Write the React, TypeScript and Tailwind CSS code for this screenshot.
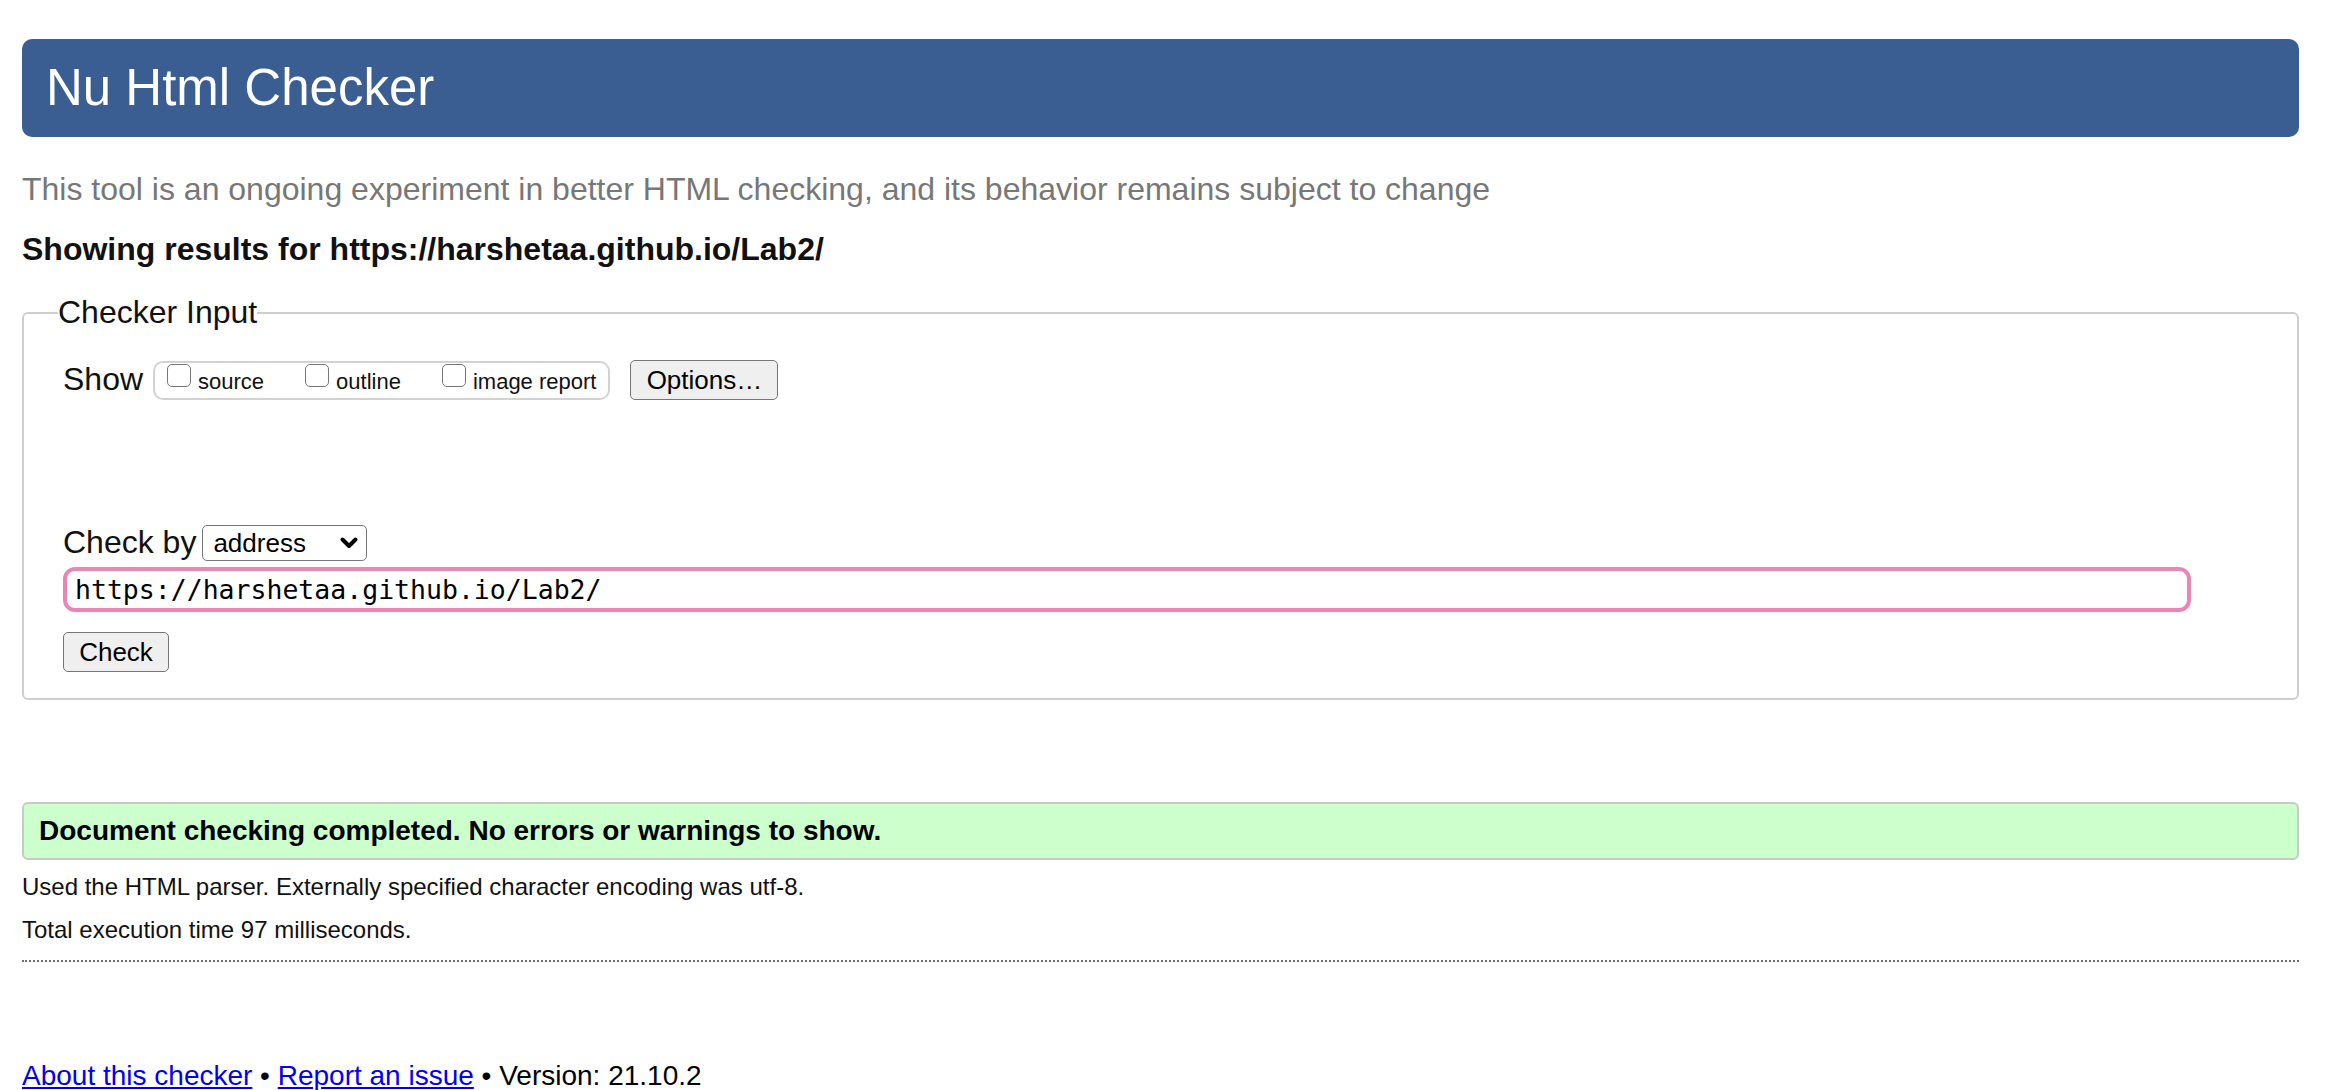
import React from "react";

const sans = "font-['Liberation_Sans',Arial,Helvetica,sans-serif]";
const mono = "font-['DejaVu_Sans_Mono',monospace]";

function ShowOption({ label }: { label: string }) {
    return (
        <label className="flex items-start">
            <input
                type="checkbox"
                className="appearance-none w-[24px] h-[23px] mt-[1px] border-[1.5px] border-[#767676] rounded-[5px] bg-white"
            />
            <span className="text-[22px] leading-[26px] mt-[6px] ml-[7px] text-[#111]">{label}</span>
        </label>
    );
}

export default function App() {
    return (
        <div className={`${sans} bg-white text-[#111] pl-[22px] pr-[51px] pb-[40px] min-h-[1090px]`}>
            {/* Title bar */}
            <div className="mt-[39px] h-[98px] rounded-[10px] bg-[#3a5e92] flex items-center pl-[24px]">
                <h1 className="text-white text-[51px] leading-[58px]">Nu Html Checker</h1>
            </div>

            <p className="mt-[34px] text-[32px] leading-[37px] text-[#777]">
                This tool is an ongoing experiment in better HTML checking, and its behavior remains subject to change
            </p>
            <p className="mt-[23px] text-[32px] leading-[37px] font-bold">
                Showing results for https://harshetaa.github.io/Lab2/
            </p>

            {/* Checker input */}
            <fieldset className="mt-[26px] border-2 border-[#cecece] rounded-[6px] pl-[39px] pr-[24px] pt-[29px] pb-[26px]">
                <legend className="-ml-[5px] p-0 text-[32px] leading-[37px]">Checker Input</legend>

                <div className="flex items-start">
                    <span className="text-[32px] leading-[37px] mt-[1px]">Show</span>
                    <div className="ml-[10px] mt-[1px] h-[39px] flex items-start gap-[41px] border-2 border-[#d2d2d2] rounded-[10px] pl-[12px] pr-[12px]">
                        <ShowOption label="source" />
                        <ShowOption label="outline" />
                        <ShowOption label="image report" />
                    </div>
                    <button className="ml-[20px] h-[40px] w-[148px] bg-[#efefef] border-[1.5px] border-[#767676] rounded-[5px] text-[26px] leading-[30px] text-black">
                        Options…
                    </button>
                </div>

                <div className="mt-[124px] flex items-center">
                    <span className="text-[32px] leading-[37px]">Check by</span>
                    <div className="ml-[6px] h-[36px] w-[165px] flex items-center justify-between border-[1.5px] border-[#767676] rounded-[5px] pl-[10px] pr-[7px] bg-white">
                        <span className="text-[26px] leading-[30px] text-black">address</span>
                        <svg width="20" height="15" viewBox="0 0 20 15" fill="none" stroke="#000" strokeWidth="4" strokeLinecap="round" strokeLinejoin="round">
                            <path d="M3.5 4.5l6.5 6.5 6.5-6.5" />
                        </svg>
                    </div>
                </div>

                <input
                    readOnly
                    value="https://harshetaa.github.io/Lab2/"
                    className={`${mono} mt-[6px] block w-[2128px] h-[45px] border-4 border-[#ea86b6] rounded-[12px] pl-[8px] text-[26.5px] leading-[32px] text-black outline-none`}
                />

                <button className="mt-[20px] block h-[40px] w-[106px] bg-[#efefef] border-[1.5px] border-[#767676] rounded-[5px] text-[26px] leading-[30px] text-black">
                    Check
                </button>
            </fieldset>

            {/* Result */}
            <div className="mt-[102px] h-[58px] flex items-center bg-[#ccffcc] border-2 border-[#c8c8c8] rounded-[6px] pl-[15px]">
                <p className="text-[28px] leading-[32px] font-bold text-black">
                    Document checking completed. No errors or warnings to show.
                </p>
            </div>

            <p className="mt-[13px] text-[24px] leading-[28px]">
                Used the HTML parser. Externally specified character encoding was utf-8.
            </p>
            <p className="mt-[15px] text-[24px] leading-[28px]">Total execution time 97 milliseconds.</p>

            <div className="mt-[16px] border-t-2 border-dotted border-[#6e6e6e]" />

            <p className="mt-[98px] text-[28px] leading-[32px] text-black">
                <a href="#" className="text-[#0000ee] underline">About this checker</a>
                {" • "}
                <a href="#" className="text-[#0000ee] underline">Report an issue</a>
                {" • Version: 21.10.2"}
            </p>
        </div>
    );
}
